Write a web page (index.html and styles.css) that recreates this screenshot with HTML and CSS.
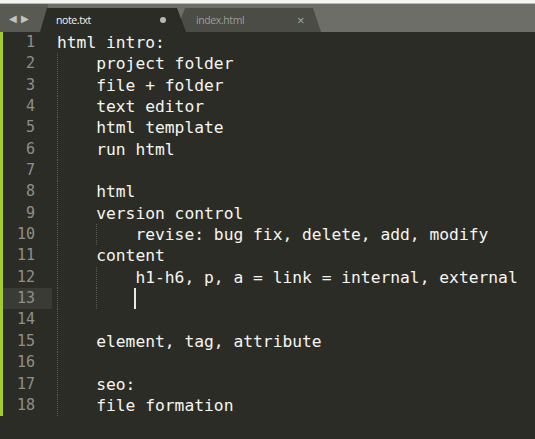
FILE: index.html
```html
<!DOCTYPE html>
<html>
<head>
<meta charset="utf-8">
<link rel="stylesheet" href="styles.css">
</head>
<body>
<div class="top"></div>
<div class="tabbar">
  <div class="arrows"><span class="arr">&#9664;</span><span class="arr">&#9654;</span></div>
  <div class="tab active"><span class="tname">note.txt</span><span class="dot"></span></div>
  <div class="tab inactive"><span class="tname">index.html</span><span class="close">&#215;</span></div>
</div>
<div class="editor">
  <div class="line"><span class="bar"></span><span class="num">1</span><span class="code">html intro:</span></div>
  <div class="line"><span class="bar"></span><span class="num">2</span><span class="code"><span class="ind"></span>project folder</span></div>
  <div class="line"><span class="bar"></span><span class="num">3</span><span class="code"><span class="ind"></span>file + folder</span></div>
  <div class="line"><span class="bar"></span><span class="num">4</span><span class="code"><span class="ind"></span>text editor</span></div>
  <div class="line"><span class="bar"></span><span class="num">5</span><span class="code"><span class="ind"></span>html template</span></div>
  <div class="line"><span class="bar"></span><span class="num">6</span><span class="code"><span class="ind"></span>run html</span></div>
  <div class="line"><span class="bar"></span><span class="num">7</span><span class="code"><span class="ind"></span></span></div>
  <div class="line"><span class="bar"></span><span class="num">8</span><span class="code"><span class="ind"></span>html</span></div>
  <div class="line"><span class="bar"></span><span class="num">9</span><span class="code"><span class="ind"></span>version control</span></div>
  <div class="line"><span class="bar"></span><span class="num">10</span><span class="code"><span class="ind"></span><span class="ind"></span>revise: bug fix, delete, add, modify</span></div>
  <div class="line"><span class="bar"></span><span class="num">11</span><span class="code"><span class="ind"></span>content</span></div>
  <div class="line"><span class="bar"></span><span class="num">12</span><span class="code"><span class="ind"></span><span class="ind"></span>h1-h6, p, a = link = internal, external</span></div>
  <div class="line current"><span class="bar"></span><span class="num">13</span><span class="code"><span class="ind"></span><span class="ind"></span><span class="caret"></span></span></div>
  <div class="line"><span class="bar"></span><span class="num">14</span><span class="code"><span class="ind"></span></span></div>
  <div class="line"><span class="bar"></span><span class="num">15</span><span class="code"><span class="ind"></span>element, tag, attribute</span></div>
  <div class="line"><span class="bar"></span><span class="num">16</span><span class="code"><span class="ind"></span></span></div>
  <div class="line"><span class="bar"></span><span class="num">17</span><span class="code"><span class="ind"></span>seo:</span></div>
  <div class="line"><span class="bar"></span><span class="num">18</span><span class="code"><span class="ind"></span>file formation</span></div>
</div>
</body>
</html>
```
FILE: styles.css
```css
html, body {
  margin: 0;
  padding: 0;
  height: 100%;
  overflow: hidden;
  background: #2c2c27;
}
.top {
  height: 3px;
  background: #f4f4f2;
  border-bottom: 1px solid #b9b9b4;
}
.tabbar {
  height: 28px;
  display: flex;
  align-items: flex-end;
  background: #6e6e68;
  font-family: "Open Sans", "Noto Sans", sans-serif;
  font-size: 10.5px;
  letter-spacing: -0.4px;
}
.arrows {
  align-self: stretch;
  width: 48px;
  background: #5a5a54;
  display: flex;
  align-items: center;
  gap: 4px;
  padding-left: 9px;
  box-sizing: border-box;
  color: #c4c4bf;
  font-size: 10px;
  letter-spacing: 0;
}
.tab {
  height: 24px;
  display: flex;
  align-items: center;
  box-sizing: border-box;
}
.tab.active {
  width: 146px;
  margin-left: -8px;
  background: #2c2c27;
  clip-path: polygon(7px 0, calc(100% - 9px) 0, 100% 100%, 0 100%);
  padding-left: 16px;
  padding-right: 20px;
  color: #f2f2ee;
  justify-content: space-between;
  position: relative;
  z-index: 2;
}
.tab.inactive {
  width: 145px;
  margin-left: -10px;
  background: #4c4c47;
  clip-path: polygon(9px 0, calc(100% - 8px) 0, 100% 100%, 0 100%);
  padding-left: 20px;
  padding-right: 17px;
  color: #9d9d98;
  justify-content: space-between;
}
.dot {
  width: 6px;
  height: 6px;
  border-radius: 50%;
  background: #b8b8b3;
}
.close {
  font-size: 13px;
  color: #a8a8a3;
}
.editor {
  font-family: "DejaVu Sans Mono", "Liberation Mono", monospace;
}
.line {
  display: grid;
  grid-template-columns: 3px 49px 1fr;
  height: 21.35px;
  line-height: 21.35px;
}
.bar {
  background: #a4cc2e;
}
.num {
  text-align: right;
  padding-right: 17px;
  color: #8f8f8a;
  font-size: 15px;
}
.current .num {
  background: #3b3b36;
}
.code {
  color: #f6f6f1;
  font-size: 16.3px;
  white-space: pre;
  display: flex;
  align-items: stretch;
  padding-left: 5px;
}
.ind {
  display: inline-block;
  width: 4ch;
  flex: none;
  background-image: linear-gradient(#5a5a54 50%, transparent 50%);
  background-size: 1px 2px;
  background-repeat: repeat-y;
  background-position: 0 0;
}
.caret {
  width: 2px;
  margin: 0 0 0 -1px;
  background: #e8e8e4;
}
```
